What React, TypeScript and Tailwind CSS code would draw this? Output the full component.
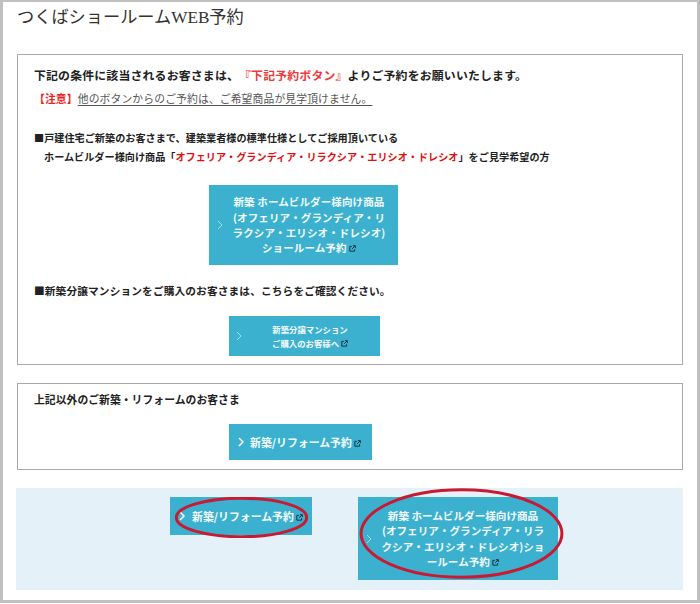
const JP = 'font-["Noto_Sans_CJK_JP",sans-serif]';

function LinkIcon({ className = '' }: { className?: string }) {
  return (
    <svg viewBox="0 0 10 10" fill="none" stroke="#0f3342" strokeWidth="1.4" className={`inline-block h-[7px] w-[7px] align-baseline ${className}`}>
      <path d="M4 2H1.2v6.8H8V6" />
      <path d="M5.5 1H9v3.5M9 1 4.5 5.5" />
    </svg>
  );
}

function Chevron({ faint = false }: { faint?: boolean }) {
  return (
    <svg viewBox="0 0 6 10" fill="none" stroke={faint ? '#a6e0ec' : '#ffffff'} strokeWidth={faint ? 1 : 1.5} className="h-[10px] w-[6px] shrink-0">
      <path d="M1 1l4 4-4 4" />
    </svg>
  );
}

function Oval({ className }: { className: string }) {
  return (
    <svg viewBox="0 0 200 100" preserveAspectRatio="none" fill="none" className={`absolute ${className}`}>
      <ellipse cx="100" cy="50" rx="98" ry="47" stroke="#c81a32" strokeWidth="3" vectorEffect="non-scaling-stroke" />
    </svg>
  );
}

export default function App() {
  return (
    <div className={`h-[603px] w-[700px] overflow-hidden border-x-[3px] border-t-2 border-b-[3px] border-[#c0c0c0] bg-white pl-[13px] pr-[14px] text-[#222] [text-spacing-trim:space-all] ${JP}`}>
      <h1 className='flex h-[32px] items-center pl-[1px] font-["Liberation_Serif","Noto_Sans_CJK_JP",serif] text-[17.2px] font-normal text-[#333]'>
        つくばショールームWEB予約
      </h1>

      {/* 条件の案内 */}
      <section className="ml-[1px] mt-[20px] h-[311px] border border-[#aaaaaa] pl-[16px] pt-[10px]">
        <p className="text-[11.9px] font-bold leading-[20px] tracking-[0.17px]">
          下記の条件に該当されるお客さまは、<span className="text-[#ee3a3a]">『下記予約ボタン』</span>よりご予約をお願いいたします。
        </p>
        <p className="mt-[3px] text-[10.8px] leading-[20px] tracking-[0.13px]">
          <span className="font-bold text-[#e22]">【注意】</span>
          <span className="text-[#555] underline underline-offset-2">他のボタンからのご予約は、ご希望商品が見学頂けません。</span>
        </p>
        <p className="mt-[20px] text-[10.1px] font-bold leading-[19px] tracking-[0.05px]">■戸建住宅ご新築のお客さまで、建築業者様の標準仕様としてご採用頂いている</p>
        <p className="pl-[10px] text-[10.1px] font-bold leading-[19px] tracking-[0.04px]">
          ホームビルダー様向け商品「<span className="text-[#e01010]">オフェリア・グランディア・リラクシア・エリシオ・ドレシオ</span>」をご見学希望の方
        </p>

        <a className="ml-[175px] mt-[19px] flex h-[80px] w-[189px] items-center bg-[#3cb1cf] pl-[8px] pr-[5px] text-center text-[10.5px] font-bold leading-[15.3px] tracking-[0.13px] text-[#f3fbfd]">
          <Chevron faint />
          <span className="flex-1 whitespace-nowrap pl-[2px]">
            新築 ホームビルダー様向け商品<br />
            (オフェリア・グランディア・リ<br />
            ラクシア・エリシオ・ドレシオ)<br />
            ショールーム予約 <LinkIcon />
          </span>
        </a>

        <p className="mt-[16px] text-[10.7px] font-bold leading-[20px] tracking-[0.12px]">■新築分譲マンションをご購入のお客さまは、こちらをご確認ください。</p>

        <a className="ml-[195px] mt-[15px] flex h-[40px] w-[151px] items-center bg-[#3cb1cf] pl-[7px] pr-[2px] text-center text-[8.4px] font-bold leading-[14px] text-[#f3fbfd]">
          <Chevron faint />
          <span className="flex-1">
            新築分譲マンション<br />
            ご購入のお客様へ <LinkIcon />
          </span>
        </a>
      </section>

      {/* その他のお客さま */}
      <section className="ml-[1px] mt-[18px] h-[87px] border border-[#aaaaaa] pl-[16px] pt-[5px]">
        <p className="text-[10.8px] font-bold leading-[20px] tracking-[0.05px]">上記以外のご新築・リフォームのお客さま</p>
        <a className="ml-[195px] mt-[15px] flex h-[36px] w-[143px] items-center gap-[6px] bg-[#3cb1cf] pl-[9px] text-[10.9px] font-bold text-[#f3fbfd]">
          <Chevron />
          <span className="whitespace-nowrap">新築/リフォーム予約 <LinkIcon /></span>
        </a>
      </section>

      {/* 下部ボタン */}
      <section className="mt-[18px] flex h-[102px] items-start gap-[46px] bg-[#e4f1f8] pl-[154px] pt-[9px]">
        <a className="relative flex h-[38px] w-[142px] items-center gap-[7px] bg-[#3cb1cf] pl-[9px] text-[10.9px] font-bold text-[#f3fbfd]">
          <Chevron />
          <span className="whitespace-nowrap">新築/リフォーム予約 <LinkIcon /></span>
          <Oval className="left-[5px] top-[0px] h-[41px] w-[133px]" />
        </a>
        <a className="relative flex h-[83px] w-[200px] items-center bg-[#3cb1cf] pl-[8px] pr-[4px] text-center text-[10.6px] font-bold leading-[15.3px] text-[#f3fbfd]">
          <Chevron faint />
          <span className="flex-1 whitespace-nowrap">
            新築 ホームビルダー様向け商品<br />
            (オフェリア・グランディア・リラ<br />
            クシア・エリシオ・ドレシオ)ショ<br />
            ールーム予約 <LinkIcon />
          </span>
          <Oval className="left-[1px] top-[-10px] h-[93px] w-[205px]" />
        </a>
      </section>
    </div>
  );
}
